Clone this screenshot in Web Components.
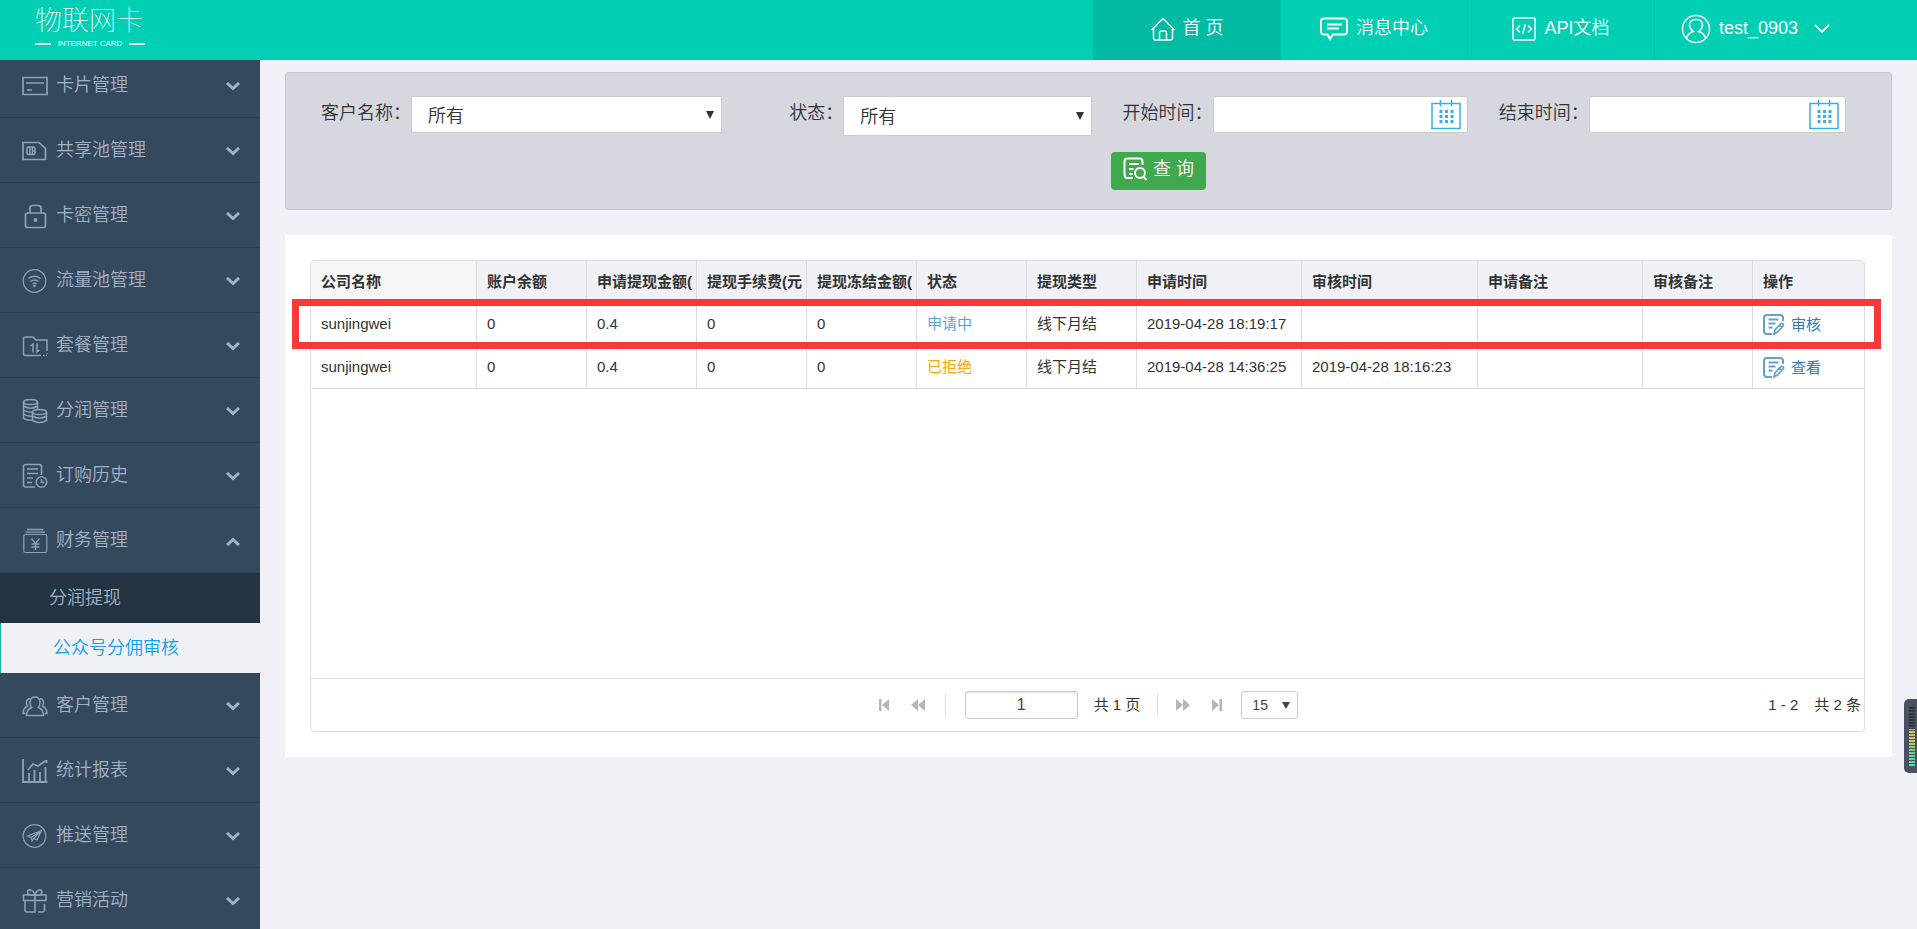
<!DOCTYPE html>
<html lang="zh-CN">
<head>
<meta charset="utf-8">
<meta name="viewport" content="width=device-width, initial-scale=1">
<title>物联网卡</title>
<style>
  html, body { margin: 0; }
  body {
    font-family: "Liberation Sans", "Noto Sans CJK SC", sans-serif;
    font-size: 15px;
    color: #333;
    background: #f0f1f6;
  }
</style>
</head>
<body>
<iot-app></iot-app>

<script>
const define = (name, html, setup) => {
  const tpl = document.createElement('template');
  tpl.innerHTML = html;
  customElements.define(name, class extends HTMLElement {
    constructor() {
      super();
      this.attachShadow({ mode: 'open' }).append(tpl.content.cloneNode(true));
    }
    connectedCallback() { if (setup) setup(this, this.shadowRoot); }
  });
};

/* Line icons: [width, height, markup] */
const ICONS = {
  home: [26, 24, '<path d="M1.500 13 13 1.500 24.500 13M3.500 11.500V21q0 2 2 2h15q2 0 2-2v-9.500M9.500 23v-7q0-2 2-2h3q2 0 2 2v7"/>'],
  message: [28, 24, '<path stroke-width="2" d="M4 1.500h20q3 0 3 3v10q0 3-3 3H13L10 22l-2.500-4.500H4q-3 0-3-3v-10q0-3 3-3zM7 7.500h15M7 11.500h12"/>'],
  api: [24, 24, '<rect x="1" y="1" width="22" height="22" rx="1"/><path d="M8 8.500 4.500 12 8 15.500M16 8.500l3.500 3.500-3.500 3.500M13.500 7l-3 10"/>'],
  user: [30, 30, '<circle cx="15" cy="15" r="13.500"/><path d="M5.500 24q2-5.500 7-6.500-4-3-4-6.500 0-5.500 6.500-5.500t6.500 5.500q0 3.500-4 6.500 5 1 7 6.500"/>'],
  card: [26, 26, '<path stroke-width="1.700" d="M1 4.500h24v17H1zM4 10h18M5 17h5"/>'],
  sim: [26, 26, '<path stroke-width="1.700" d="M1 4.500h16l6.500 6v11H1z"/><rect x="5" y="9" width="8" height="7.500" rx="1.500"/><path d="M8 9v7.500M10.500 9v7.500M10.500 12.700H13"/>'],
  lock: [26, 26, '<rect x="3.500" y="10" width="20" height="14.500" rx="2" stroke-width="1.700"/><path stroke-width="1.700" d="M8 10V5q0-2.500 2.500-2.500h6Q19 2.500 19 5v5"/><circle cx="13.500" cy="17" r="2" fill="currentColor" stroke="none"/>'],
  wifi: [26, 26, '<circle cx="12.500" cy="13" r="11.300" stroke-width="1.200"/><path d="M6.500 10.500q6-4.500 12 0M8.500 13.500q4-3 8 0M10.500 16q2-1.500 4 0"/><circle cx="12.500" cy="18" r="1.300" fill="currentColor" stroke="none"/>'],
  folder: [26, 26, '<path d="M25 18V7H14l-3-3H3Q1.500 4 1.500 5.500V21q0 1.500 1.500 1.500h16M21 22.500h1.500M24 22.500h1M25 20v.5M8.500 13l2.500-2v8.500M15 10.500V19l2.500-2"/>'],
  coins: [26, 26, '<ellipse cx="8.500" cy="4" rx="7" ry="2.500"/><path d="M1.500 4v16q2 2.500 8.500 2M15.500 4v7M1.500 8q7 4.500 14 0M1.500 12q4 3 9.500 2M1.500 16q4 2.800 8.500 2"/><ellipse cx="17.500" cy="14" rx="7" ry="2.500"/><path d="M10.500 14v8.500q7 4 14 0V14M10.500 18q7 4.500 14 0"/>'],
  history: [26, 26, '<path stroke-width="1.600" d="M13 24H3.500Q1.500 24 1.500 22V3.500q0-2 2-2h14q2 0 2 2V12M5 6h11M5 10.500h11M5 15h6M5 19.500h5"/><circle cx="19.500" cy="19" r="5.300" stroke-width="1.600"/><path d="M19.500 16v3.500h3"/>'],
  finance: [26, 26, '<rect x="1.800" y="6.500" width="23" height="18" rx="1.500" stroke-width="1.200"/><path stroke-width="1.300" d="M3.500 4.200h19.500M5 1.500h16.500M9.500 10.500l4 5 4-5M13.500 15.500v6.500M9.500 16h8M9.500 19h8"/>'],
  people: [26, 26, '<path d="M4.500 22.500q0-6 5-8Q8 12.500 8 9q.5-5 5-5t5 5q0 3.500-1.500 5.500 5 2 5 8zM8 5.500Q4.500 6 4.500 9.500q0 2 1 3.500-4.500 2.500-4.500 7.500h2.500M18 5.500q3.500.5 3.500 4 0 2-1 3.500 4.500 2.500 4.500 7.500h-2.500"/>'],
  chart: [26, 26, '<path stroke-width="1.800" d="M1 1v23h24.500M7 23v-8M12.500 23V12M18 23v-9M23.500 23V9M6 12l5-6 5 2 8-5.500M24.500 2v3"/>'],
  plane: [26, 26, '<circle cx="12.500" cy="13" r="11.300" stroke-width="1.200"/><path stroke-width="1.200" d="M5.500 13 19.500 7.500 15 17l-3.500-1.500L10 18l-1-3.500zM9 14.500l10.500-7-8 8"/>'],
  gift: [26, 26, '<path stroke-width="1.600" d="M1.500 7h22.500v5.500H1.500zM3 12.500V22q0 2 2 2h8v-17M22.500 16v6q0 2-2 2H16M13 7Q5.500 8 5.500 4q0-2.500 3-2Q12 3 13 7q1-4 4-5 3-.5 3 2 0 4-7 3"/>'],
  search: [24, 24, '<path stroke-width="2" d="M10 21H4.500q-3 0-3-3V4q0-2.500 3-2.500h12q3 0 3 3V8M6 7h10M6 12h4.500M6 17h4"/><circle cx="17" cy="16" r="5" stroke-width="2"/><path stroke-width="2" d="m20.500 19.500 3 3.500"/>'],
  edit: [22, 22, '<path stroke-width="2" d="M9 20H4q-3 0-3-3V4q0-3 3-3h13q3 0 3 3v3M5.500 5.500h10M5.500 9.500h7M5.500 13.500h4"/><path stroke-width="1.700" d="m11 20 1-4 6-6.500q2.800-.3 2.500 2L14.500 18zM16.500 11l2.500 2.500"/>'],
  calendar: [30, 30, '<path stroke-width="1.500" d="M1 3.500h28V28.500H1z"/><path stroke-width="1.500" d="M9.500 0v6.500M20.500 0v6.500"/><path stroke-width="3" stroke-dasharray="3 2.500" d="M8.500 11.500h14M8.500 16.500h14M8.500 21.500h14"/>'],
  down: [16, 12, '<path d="m1 2 7 7 7-7" stroke-width="1.800"/>']
};

define('line-icon', `
  <style>
    :host { display: inline-flex; flex: none; }
    svg { display: block; fill: none; stroke: currentColor; stroke-width: 1.5; }
  </style>`,
  (el, root) => {
    const icon = ICONS[el.getAttribute('name')];
    if (!icon) return;
    const [w, h, body] = icon;
    root.querySelector('svg')?.remove();
    root.querySelector('style').insertAdjacentHTML('afterend',
      `<svg width="${w}" height="${h}" viewBox="0 0 ${w} ${h}" aria-hidden="true">${body}</svg>`);
  });

define('brand-logo', `
  <style>
    :host { display: block; width: 110px; margin-left: 35px; color: #fff; }
    .name { font-size: 27px; font-weight: 100; line-height: 36px; margin: 3px 0 0; white-space: nowrap; }
    .sub { display: flex; align-items: center; justify-content: space-between; font-size: 8px; line-height: 10px; white-space: nowrap; }
    .sub::before, .sub::after { content: ""; width: 16px; height: 2px; background: #e4fbf7; }
  </style>
  <div class="name">物联网卡</div>
  <div class="sub"><span>INTERNET CARD</span></div>`);

define('nav-tab', `
  <style>
    :host { display: block; box-sizing: border-box; width: 187px; border-left: 1px solid #04c4aa; }
    :host([active]) { background: #03baa3; border-color: #03baa3; }
    :host([account]) { width: 263px; }
    a { display: flex; align-items: center; justify-content: center; gap: 8px; height: 100%; padding-bottom: 2px; box-sizing: border-box; color: #fff; text-decoration: none; font-size: 18px; font-weight: 350; white-space: nowrap; }
    :host([active]) a { gap: 6px; }
    :host([account]) a { justify-content: flex-start; padding-left: 26px; }
    ::slotted(span) { line-height: 24px; margin-bottom: 2px; }
    ::slotted([name="down"]) { margin-left: 8px; }
  </style>
  <a href="#"><slot></slot></a>`);

define('app-header', `
  <style>
    :host { display: flex; justify-content: space-between; height: 60px; background: #00cfb4; position: relative; z-index: 2; }
    nav { display: flex; }
  </style>
  <brand-logo></brand-logo>
  <nav>
    <nav-tab active><line-icon name="home"></line-icon><span>首 页</span></nav-tab>
    <nav-tab><line-icon name="message"></line-icon><span>消息中心</span></nav-tab>
    <nav-tab><line-icon name="api"></line-icon><span>API文档</span></nav-tab>
    <nav-tab account><line-icon name="user"></line-icon><span>test_0903</span><line-icon name="down"></line-icon></nav-tab>
  </nav>`);

define('menu-item', `
  <style>
    :host { display: block; }
    button { all: unset; box-sizing: border-box; display: flex; align-items: center; width: 100%; height: 65px; padding: 0 20px 0 22px; border-bottom: 1px solid #2c4054; color: #a3b1c6; font-size: 18px; font-weight: 350; cursor: pointer; }
    line-icon { margin: 2px 8px 0 0; color: #8fa0b8; }
    span { flex: 1; line-height: 26px; white-space: nowrap; }
    .chev { margin-top: 2px; fill: none; stroke: #a3b1c6; stroke-width: 3; }
    :host([open]) .chev { transform: rotate(180deg); }
  </style>
  <button type="button"><line-icon></line-icon><span><slot></slot></span>
    <svg class="chev" width="14" height="9" viewBox="0 0 14 9" aria-hidden="true"><path d="m1 1 6 5.500L13 1"/></svg>
  </button>
  <slot name="sub"></slot>`,
  (el, root) => {
    const icon = document.createElement('line-icon');
    icon.setAttribute('name', el.getAttribute('icon'));
    root.querySelector('line-icon').replaceWith(icon);
    root.querySelector('button').setAttribute('aria-expanded', el.hasAttribute('open'));
  });

define('sub-item', `
  <style>
    :host { display: block; background: #243443; color: #a3b1c6; --indent: 49px; }
    :host([current]) { background: #f0f1f6; color: #0ea0f5; box-shadow: inset 1px 0 #14b8a6; --indent: 53px; }
    a { display: block; height: 50px; line-height: 50px; padding-left: var(--indent); color: inherit; text-decoration: none; font-size: 18px; font-weight: 350; }
  </style>
  <a href="#"><slot></slot></a>`);

define('side-menu', `
  <style>
    :host { display: block; background: #35495e; overflow: hidden; }
    nav { margin-top: -7px; }
  </style>
  <nav>
    <menu-item icon="card">卡片管理</menu-item>
    <menu-item icon="sim">共享池管理</menu-item>
    <menu-item icon="lock">卡密管理</menu-item>
    <menu-item icon="wifi">流量池管理</menu-item>
    <menu-item icon="folder">套餐管理</menu-item>
    <menu-item icon="coins">分润管理</menu-item>
    <menu-item icon="history">订购历史</menu-item>
    <menu-item icon="finance" open>财务管理
      <sub-item slot="sub">分润提现</sub-item>
      <sub-item slot="sub" current>公众号分佣审核</sub-item>
    </menu-item>
    <menu-item icon="people">客户管理</menu-item>
    <menu-item icon="chart">统计报表</menu-item>
    <menu-item icon="plane">推送管理</menu-item>
    <menu-item icon="gift">营销活动</menu-item>
  </nav>`);

const FIELD_CSS = `
    :host { display: flex; align-items: flex-start; font-size: 18px; font-weight: 350; }
    label { line-height: 34px; white-space: nowrap; }
    .box { flex: 1; position: relative; min-width: 0; }
    select, input { appearance: none; box-sizing: border-box; display: block; width: 100%; height: 37px; margin: 0; padding: 2px 16px 0; border: 1px solid #ccc; border-radius: 0; background: #fff; color: #333; font: inherit; }
    input { border-radius: 3px; }`;

define('select-field', `
  <style>${FIELD_CSS}
    :host([tall]) select { height: 40px; }
    svg { position: absolute; right: 8px; top: 50%; margin-top: -4px; fill: #333; pointer-events: none; }
  </style>
  <label for="c"><slot></slot></label>
  <div class="box"><select id="c"><option>所有</option></select>
    <svg width="8" height="8" viewBox="0 0 8 8" aria-hidden="true"><path d="M0 0h8L4 8z"/></svg></div>`);

define('date-field', `
  <style>${FIELD_CSS}
    line-icon { position: absolute; right: 7px; top: 4px; color: #35aef2; pointer-events: none; }
  </style>
  <label for="c"><slot></slot></label>
  <div class="box"><input id="c" type="text"><line-icon name="calendar"></line-icon></div>`);

define('filter-panel', `
  <style>
    :host { display: block; box-sizing: border-box; height: 138px; border: 1px solid #c8c9cd; border-radius: 3px; background: #d6d7df; padding: 23px 45px 0 35px; }
    .fields { display: grid; grid-template-columns: 437fr 302fr 345fr 347fr; column-gap: 31px; height: 40px; }
    .fields > :first-child { margin-right: 36px; }
    .actions { display: flex; justify-content: center; margin-top: 16px; padding-left: 150px; }
    button { display: flex; align-items: center; justify-content: center; gap: 6px; width: 95px; height: 38px; padding: 0 0 4px; border: 0; border-radius: 4px; background: #3fa94e; color: #fff; font: inherit; font-size: 18px; font-weight: 350; line-height: 24px; white-space: nowrap; }
  </style>
  <form onsubmit="return false">
    <div class="fields">
      <select-field>客户名称：</select-field>
      <select-field tall>状态：</select-field>
      <date-field>开始时间：</date-field>
      <date-field>结束时间：</date-field>
    </div>
    <div class="actions"><button type="submit"><line-icon name="search"></line-icon>查 询</button></div>
  </form>`);

define('data-grid', `
  <style>
    :host { display: block; position: relative; }
    table { width: 100%; table-layout: fixed; border-collapse: separate; border-spacing: 0; }
    th, td { box-sizing: border-box; height: 43px; padding: 0 0 0 10px; border-right: 1px solid #ddd; border-bottom: 1px solid #ddd; text-align: left; white-space: nowrap; overflow: hidden; font-size: 15px; line-height: 22px; }
    th { height: 42px; background: #eff1f7; font-weight: bold; }
    th:first-child { background: #f5f5f5; }
    th:last-child, td:last-child { border-right: 0; }
    .pending { color: #56a5e3; }
    .refused { color: #ffa500; }
    a { display: inline-flex; align-items: center; gap: 6px; vertical-align: middle; color: #337ab7; text-decoration: none; }
    line-icon { color: #649fce; }
    .mark { position: absolute; top: 38px; left: -19px; right: -17px; height: 50px; box-sizing: border-box; border: 7px solid #fb3838; pointer-events: none; }
  </style>
  <table>
    <colgroup>
      <col style="width:166px"><col style="width:110px"><col style="width:110px"><col style="width:110px"><col style="width:110px"><col style="width:110px"><col style="width:110px"><col style="width:165px"><col style="width:176px"><col style="width:165px"><col style="width:110px"><col>
    </colgroup>
    <thead><tr>
      <th>公司名称</th><th>账户余额</th><th>申请提现金额(</th><th>提现手续费(元</th><th>提现冻结金额(</th><th>状态</th><th>提现类型</th><th>申请时间</th><th>审核时间</th><th>申请备注</th><th>审核备注</th><th>操作</th>
    </tr></thead>
    <tbody>
      <tr><td>sunjingwei</td><td>0</td><td>0.4</td><td>0</td><td>0</td><td class="pending">申请中</td><td>线下月结</td><td>2019-04-28 18:19:17</td><td></td><td></td><td></td><td><a href="#"><line-icon name="edit"></line-icon>审核</a></td></tr>
      <tr><td>sunjingwei</td><td>0</td><td>0.4</td><td>0</td><td>0</td><td class="refused">已拒绝</td><td>线下月结</td><td>2019-04-28 14:36:25</td><td>2019-04-28 18:16:23</td><td></td><td></td><td><a href="#"><line-icon name="edit"></line-icon>查看</a></td></tr>
    </tbody>
  </table>
  <div class="mark"></div>`);

define('page-bar', `
  <style>
    :host { display: grid; grid-template-columns: 1fr auto 1fr; align-items: center; height: 52px; border-top: 1px solid #ddd; line-height: 22px; white-space: nowrap; }
    .pages { grid-column: 2; display: flex; align-items: center; }
    button { all: unset; display: flex; width: 14px; height: 12px; justify-content: center; margin-right: 20px; }
    button svg { fill: #b4b6b8; }
    i { width: 1px; height: 22px; background: #ddd; }
    input, select { appearance: none; box-sizing: border-box; height: 28px; margin: 0; border: 1px solid #ccc; border-radius: 3px; background: #fff; color: #444; font: inherit; }
    input { width: 113px; margin: 0 16px 0 19px; text-align: center; font-size: 16px; box-shadow: inset 0 1px 2px #ddd; }
    .total { margin-right: 17px; }
    .size { position: relative; }
    select { display: block; width: 57px; padding: 0 10px; font-size: 14px; }
    .size svg { position: absolute; right: 8px; top: 11px; fill: #444; pointer-events: none; }
    .count { grid-column: 3; justify-self: end; display: flex; gap: 16px; padding-right: 3px; }
    .next { margin: 0 20px 0 18px; }
    .last { margin-right: 17px; }
  </style>
  <div class="pages">
    <button type="button" aria-label="first"><svg width="10" height="12"><path d="M0 0h2.500v12H0zM10 0v12L3 6z"/></svg></button>
    <button type="button" aria-label="previous"><svg width="14" height="12"><path d="M7 0v12L0 6zM14 0v12L7 6z"/></svg></button>
    <i></i>
    <input type="text" value="1" aria-label="page">
    <span class="total">共 1 页</span>
    <i></i>
    <button class="next" type="button" aria-label="next"><svg width="14" height="12"><path d="M0 0v12l7-6zM7 0v12l7-6z"/></svg></button>
    <button class="last" type="button" aria-label="last"><svg width="10" height="12"><path d="M7.500 0H10v12H7.500zM0 0v12l7-6z"/></svg></button>
    <div class="size"><select aria-label="page size"><option>15</option></select>
      <svg width="8" height="7" viewBox="0 0 8 7" aria-hidden="true"><path d="M0 0h8L4 7z"/></svg></div>
  </div>
  <div class="count"><span>1 - 2</span><span>共 2 条</span></div>`);

define('grid-card', `
  <style>
    :host { display: block; background: #fff; padding: 25px 27px 25px 25px; }
    .frame { border: 1px solid #ddd; border-radius: 4px; display: flex; flex-direction: column; }
    .body { min-height: 417px; }
  </style>
  <div class="frame">
    <div class="body"><slot></slot></div>
    <slot name="footer"></slot>
  </div>`);

define('level-meter', `
  <style>
    :host { display: block; position: fixed; right: 0; top: 699px; width: 13px; height: 74px; box-sizing: border-box; border-radius: 5px 0 0 5px; background: #4c5160; padding: 8px 0 0 5px; }
    div { width: 6px; height: 60px; background: repeating-linear-gradient(transparent 0 2px, #4c5160 2px 3px), linear-gradient(#2f3542 0 22px, #d8c84a 22px, #c3d35a 34px, #6fd08a 46px, #4fd8c4 60px); }
  </style>
  <div></div>`);

define('iot-app', `
  <style>
    :host { display: flex; flex-direction: column; height: 100vh; }
    .row { flex: 1; min-height: 0; display: grid; grid-template-columns: 260px minmax(0, 1fr); }
    main { padding: 12px 25px; display: flex; flex-direction: column; gap: 25px; }
  </style>
  <app-header></app-header>
  <div class="row">
    <side-menu></side-menu>
    <main>
      <filter-panel></filter-panel>
      <grid-card><data-grid></data-grid><page-bar slot="footer"></page-bar></grid-card>
    </main>
  </div>
  <level-meter></level-meter>`);
</script>
</body>
</html>
